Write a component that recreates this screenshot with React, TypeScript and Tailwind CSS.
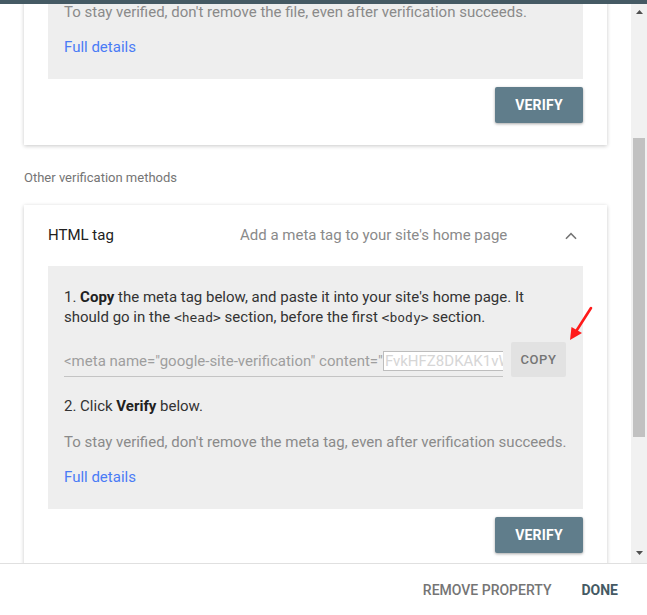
import React from "react";

function VerifyButton() {
  return (
    <div className="flex justify-end">
      <button className="h-[36px] w-[88px] rounded-[2px] bg-[#607d8b] text-[14px] font-bold tracking-[0.2px] text-white shadow-[0_1px_3px_rgba(0,0,0,0.35)]">
        VERIFY
      </button>
    </div>
  );
}

export default function App() {
  return (
    <div className="relative flex h-[615px] w-[647px] flex-col overflow-hidden bg-white font-['Roboto',sans-serif] text-[15px]">
      <div className="absolute left-0 top-0 z-20 h-[4px] w-full bg-[#455a64]" />
      <div className="flex h-[563px] w-full">
        {/* scroll content */}
        <div className="relative h-full w-[631px] overflow-hidden bg-white">
          {/* card 1 (scrolled, top clipped) */}
          <div className="mx-[24px] bg-white px-[24px] pb-[22px] shadow-[0_1px_4px_rgba(0,0,0,0.22)]">
            <div className="bg-[#eeeeee] px-[16px] pb-[22px] pt-[2px]">
              <p className="leading-[20px] text-[#8a8a8a]">
                To stay verified, don't remove the file, even after verification succeeds.
              </p>
              <p className="mt-[15px] leading-[20px] text-[#4a7cf6]">Full details</p>
            </div>
            <div className="mt-[8px]">
              <VerifyButton />
            </div>
          </div>

          <p className="ml-[24px] mt-[25px] text-[13px] leading-[16px] text-[#757575]">
            Other verification methods
          </p>

          {/* card 2 */}
          <div className="mx-[24px] mt-[19px] bg-white px-[24px] pb-[24px] shadow-[0_1px_4px_rgba(0,0,0,0.22)]">
            <div className="flex h-[61px] items-center">
              <div className="w-[192px] text-[#212121]">HTML tag</div>
              <div className="flex-1 text-[#8a8a8a]">Add a meta tag to your site's home page</div>
              <svg width="24" height="24" viewBox="0 0 24 24" className="fill-[#757575]">
                <path d="M12 8.6l-5.6 5.6 1.1 1.1L12 10.8l4.5 4.5 1.1-1.1z" />
              </svg>
            </div>
            <div className="bg-[#eeeeee] px-[16px] pb-[22px] pt-[21px]">
              <p className="leading-[20px] text-[#333333]">
                1. <b className="font-bold text-[#212121]">Copy</b> the meta tag below, and paste it into your site's home page. It
                <br />
                should go in the{" "}
                <code className="font-['DejaVu_Sans_Mono',monospace] text-[13px] text-[#333333]">&lt;head&gt;</code>{" "}
                section, before the first{" "}
                <code className="font-['DejaVu_Sans_Mono',monospace] text-[13px] text-[#333333]">&lt;body&gt;</code>{" "}
                section.
              </p>
              <div className="mt-[14px] flex items-end gap-[8px]">
                <div className="w-[439px] overflow-hidden whitespace-nowrap border-b border-[#c4c4c4] pb-[5px] leading-[20px] text-[#9e9e9e]">
                  &lt;meta name="google-site-verification" content="
                  <span className="border border-[#bdbdbd] bg-white px-[1px] text-[#d6d6d6]">FvkHFZ8DKAK1vWx7Qe2</span>
                </div>
                <button className="h-[35px] w-[55px] shrink-0 rounded-[2px] bg-[#e2e2e2] text-[13px] font-medium tracking-[0.6px] text-[#757575]">
                  COPY
                </button>
              </div>
              <p className="mt-[19px] leading-[20px] text-[#333333]">
                2. Click <b className="font-bold text-[#212121]">Verify</b> below.
              </p>
              <p className="mt-[16px] leading-[20px] text-[#8a8a8a]">
                To stay verified, don't remove the meta tag, even after verification succeeds.
              </p>
              <p className="mt-[15px] leading-[20px] text-[#4a7cf6]">Full details</p>
            </div>
            <div className="mt-[8px]">
              <VerifyButton />
            </div>
          </div>

          {/* red arrow annotation */}
          <svg className="absolute left-[562px] top-[302px]" width="36" height="44" viewBox="0 0 36 44">
            <line x1="29" y1="6" x2="13" y2="31" stroke="#ff1a1a" strokeWidth="2.6" strokeLinecap="round" />
            <polygon points="8,38 9.5,25 20,31" fill="#ff1a1a" />
          </svg>
        </div>

        {/* scrollbar */}
        <div className="relative h-full w-[16px] bg-[#f1f1f1]">
          <svg className="absolute left-[5px] top-[10px]" width="7" height="5" viewBox="0 0 7 5">
            <polygon points="0,4 3.5,0 7,4" fill="#505050" />
          </svg>
          <div className="absolute left-[2px] top-[138px] h-[299px] w-[12px] bg-[#c1c1c1]" />
          <svg className="absolute left-[5px] top-[551px]" width="7" height="5" viewBox="0 0 7 5">
            <polygon points="0,0 7,0 3.5,4" fill="#505050" />
          </svg>
        </div>
      </div>

      {/* footer */}
      <div className="flex h-[52px] items-center justify-end border-t border-[#e0e0e0] bg-white pr-[21px] pt-[2px]">
        <button className="px-[8px] text-[14px] font-medium text-[#757575]">REMOVE PROPERTY</button>
        <button className="ml-[14px] px-[8px] text-[14px] font-bold text-[#455a64]">DONE</button>
      </div>
    </div>
  );
}
